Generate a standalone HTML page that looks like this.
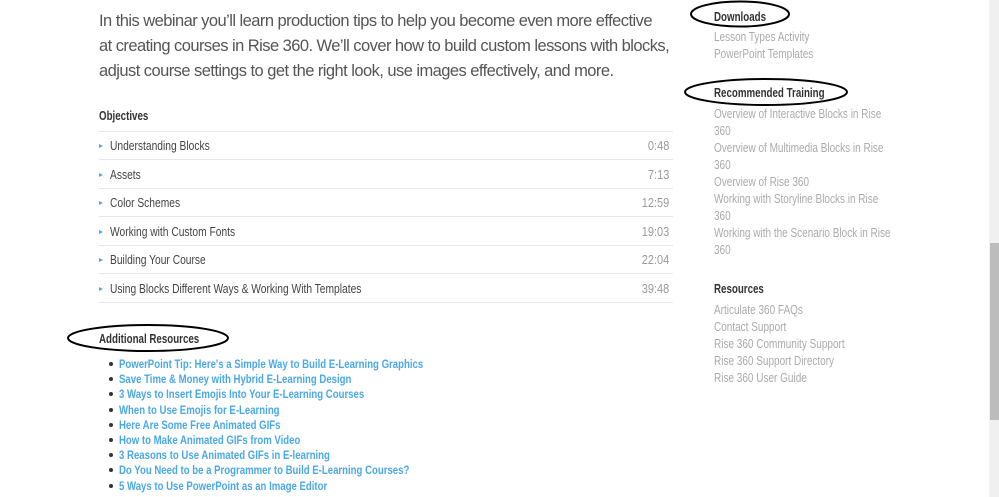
<!DOCTYPE html>
<html><head><meta charset="utf-8"><style>
*{margin:0;padding:0;box-sizing:border-box}
body{width:999px;height:497px;overflow:hidden;background:#fff;font-family:"Liberation Sans",sans-serif;position:relative}
.a{position:absolute;white-space:nowrap;transform-origin:0 50%}
.intro{font-size:16.5px;color:#555;letter-spacing:-0.55px}
.h{font-size:13px;font-weight:bold;color:#333;transform:scaleX(.75)}
.row{position:absolute;left:99px;width:574px;height:28.6px;border-bottom:1px solid #e6e6e6;font-size:12.5px;color:#444}
.row .t{position:absolute;left:11px;top:8px;transform:scaleX(.82);transform-origin:0 50%;white-space:nowrap}
.row .tri{position:absolute;left:0;top:13px;width:0;height:0;border-left:4px solid #4aa8e8;border-top:2.5px solid transparent;border-bottom:2.5px solid transparent}
.row .d{position:absolute;right:4px;top:8px;color:#999;transform:scaleX(.88);transform-origin:100% 50%}
.lk{font-size:12px;font-weight:bold;color:#4aa8e8;left:119px;transform:scaleX(.8)}
.bul{position:absolute;left:109px;width:4px;height:4px;border-radius:50%;background:#333}
.s{font-size:12.5px;color:#aaa;left:714px;transform:scaleX(.8)}
</style></head><body>
<div class="a intro" style="left:99px;top:12px">In this webinar you’ll learn production tips to help you become even more effective</div>
<div class="a intro" style="left:99px;top:37px">at creating courses in Rise 360. We’ll cover how to build custom lessons with blocks,</div>
<div class="a intro" style="left:99px;top:62px">adjust course settings to get the right look, use images effectively, and more.</div>

<div class="a h" style="left:99px;top:108px">Objectives</div>
<div style="position:absolute;left:99px;top:131px;width:574px;border-top:1px solid #e6e6e6"></div>
<div class="row" style="top:131px"><span class="tri"></span><span class="t">Understanding Blocks</span><span class="d">0:48</span></div>
<div class="row" style="top:160px"><span class="tri"></span><span class="t">Assets</span><span class="d">7:13</span></div>
<div class="row" style="top:188px"><span class="tri"></span><span class="t">Color Schemes</span><span class="d">12:59</span></div>
<div class="row" style="top:217px"><span class="tri"></span><span class="t">Working with Custom Fonts</span><span class="d">19:03</span></div>
<div class="row" style="top:245px"><span class="tri"></span><span class="t">Building Your Course</span><span class="d">22:04</span></div>
<div class="row" style="top:274px"><span class="tri"></span><span class="t">Using Blocks Different Ways &amp; Working With Templates</span><span class="d">39:48</span></div>

<div class="a h" style="left:99px;top:331px">Additional Resources</div>
<div class="bul" style="top:362px"></div><div class="a lk" style="top:357px">PowerPoint Tip: Here's a Simple Way to Build E-Learning Graphics</div>
<div class="bul" style="top:377px"></div><div class="a lk" style="top:372px">Save Time &amp; Money with Hybrid E-Learning Design</div>
<div class="bul" style="top:392px"></div><div class="a lk" style="top:387px">3 Ways to Insert Emojis Into Your E-Learning Courses</div>
<div class="bul" style="top:408px"></div><div class="a lk" style="top:403px">When to Use Emojis for E-Learning</div>
<div class="bul" style="top:423px"></div><div class="a lk" style="top:418px">Here Are Some Free Animated GIFs</div>
<div class="bul" style="top:438px"></div><div class="a lk" style="top:433px">How to Make Animated GIFs from Video</div>
<div class="bul" style="top:453px"></div><div class="a lk" style="top:448px">3 Reasons to Use Animated GIFs in E-learning</div>
<div class="bul" style="top:468px"></div><div class="a lk" style="top:463px">Do You Need to be a Programmer to Build E-Learning Courses?</div>
<div class="bul" style="top:484px"></div><div class="a lk" style="top:479px">5 Ways to Use PowerPoint as an Image Editor</div>

<div class="a h" style="left:714px;top:9px">Downloads</div>
<div class="a s" style="top:30px">Lesson Types Activity</div>
<div class="a s" style="top:47px">PowerPoint Templates</div>
<div class="a h" style="left:714px;top:85px">Recommended Training</div>
<div class="a s" style="top:107px">Overview of Interactive Blocks in Rise</div>
<div class="a s" style="top:124px">360</div>
<div class="a s" style="top:141px">Overview of Multimedia Blocks in Rise</div>
<div class="a s" style="top:158px">360</div>
<div class="a s" style="top:175px">Overview of Rise 360</div>
<div class="a s" style="top:192px">Working with Storyline Blocks in Rise</div>
<div class="a s" style="top:209px">360</div>
<div class="a s" style="top:226px">Working with the Scenario Block in Rise</div>
<div class="a s" style="top:243px">360</div>
<div class="a h" style="left:714px;top:281px">Resources</div>
<div class="a s" style="top:303px">Articulate 360 FAQs</div>
<div class="a s" style="top:320px">Contact Support</div>
<div class="a s" style="top:337px">Rise 360 Community Support</div>
<div class="a s" style="top:354px">Rise 360 Support Directory</div>
<div class="a s" style="top:371px">Rise 360 User Guide</div>

<svg style="position:absolute;left:0;top:0" width="999" height="497">
<ellipse cx="740" cy="14" rx="49" ry="12.5" fill="none" stroke="#000" stroke-width="2"/>
<ellipse cx="766" cy="92" rx="81" ry="13" fill="none" stroke="#000" stroke-width="2"/>
<ellipse cx="148" cy="338" rx="80" ry="13" fill="none" stroke="#000" stroke-width="2"/>
</svg>
<div style="position:absolute;left:989px;top:0;width:10px;height:497px;background:#f0f0f0"></div>
<div style="position:absolute;left:990px;top:243px;width:9px;height:177px;background:#bcbcbc"></div>
</body></html>
